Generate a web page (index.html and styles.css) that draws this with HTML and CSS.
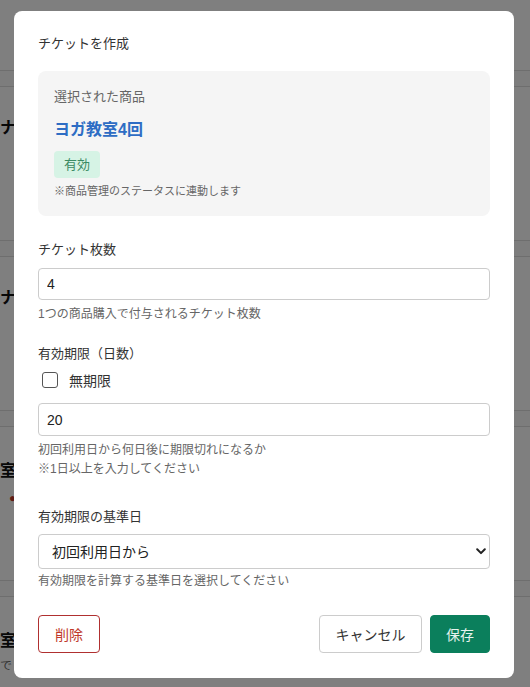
FILE: index.html
```html
<!DOCTYPE html>
<html lang="ja">
<head>
<meta charset="utf-8">
<title>チケットを作成</title>
<link rel="stylesheet" href="styles.css">
</head>
<body>
<div class="page">
  <div class="page-head"></div>
  <div class="band"></div>
  <div class="row"><span class="row-title">ナ</span></div>
  <div class="band"></div>
  <div class="row"><span class="row-title">ナ</span></div>
  <div class="band"></div>
  <div class="row row-b"><span class="row-title">室</span><span class="row-mark">●</span></div>
  <div class="band"></div>
  <div class="row row-b"><span class="row-title">室</span><span class="row-sub">で</span></div>
</div>

<div class="overlay">
  <div class="modal">
    <div class="modal-title">チケットを作成</div>

    <div class="product">
      <div class="product-label">選択された商品</div>
      <div class="product-name">ヨガ教室4回</div>
      <span class="badge">有効</span>
      <div class="product-note">※商品管理のステータスに連動します</div>
    </div>

    <div class="field field-first">
      <div class="label">チケット枚数</div>
      <input class="input" type="text" value="4">
      <div class="help">1つの商品購入で付与されるチケット枚数</div>
    </div>

    <div class="field">
      <div class="label">有効期限（日数）</div>
      <label class="check-row"><span class="checkbox"></span><span class="check-text">無期限</span></label>
      <input class="input input-days" type="text" value="20">
      <div class="help">初回利用日から何日後に期限切れになるか</div>
      <div class="help">※1日以上を入力してください</div>
    </div>

    <div class="field field-base">
      <div class="label">有効期限の基準日</div>
      <div class="select-wrap">
        <select class="select">
          <option>初回利用日から</option>
        </select>
        <svg class="chevron" width="10" height="7" viewBox="0 0 10 7"><path d="M1.2 1.3 L5 5.1 L8.8 1.3" fill="none" stroke="#222" stroke-width="2" stroke-linecap="round" stroke-linejoin="round"/></svg>
      </div>
      <div class="help help-tight">有効期限を計算する基準日を選択してください</div>
    </div>

    <div class="actions">
      <button class="btn btn-delete">削除</button>
      <div class="actions-right">
        <button class="btn btn-cancel">キャンセル</button>
        <button class="btn btn-save">保存</button>
      </div>
    </div>
  </div>
</div>
</body>
</html>
```

FILE: styles.css
```css
* { box-sizing: border-box; }

html, body {
  margin: 0;
  padding: 0;
  height: 100%;
}

body {
  font-family: "Liberation Sans", "Noto Sans CJK JP", sans-serif;
  color: #333;
  background: #fff;
  overflow: hidden;
}

/* background page */
.page {
  width: 530px;
  height: 687px;
  overflow: hidden;
}
.page-head { height: 70px; }
.band {
  height: 17px;
  border-top: 1px solid #dcdcdc;
  border-bottom: 1px solid #dcdcdc;
  background: #fafafa;
}
.row {
  height: 153px;
  padding-top: 30px;
  display: flex;
  flex-direction: column;
  align-items: flex-start;
}
.row-b { padding-top: 33px; }
.row-title {
  font-weight: bold;
  font-size: 16px;
  line-height: 22px;
  color: #111;
}
.row-mark {
  color: #c0392b;
  font-size: 12px;
  margin-left: 9px;
  margin-top: 9px;
}
.row-sub {
  font-size: 12px;
  color: #666;
  margin-top: 4px;
}

/* overlay */
.overlay {
  position: fixed;
  inset: 0;
  background: rgba(0, 0, 0, 0.5);
  padding: 11px 0 0 14px;
}

.modal {
  width: 500px;
  height: 667px;
  background: #fff;
  border-radius: 8px;
  padding: 23px 24px 0 24px;
}

.modal-title {
  font-size: 13px;
  line-height: 20px;
  color: #333;
}

.product {
  margin-top: 17px;
  background: #f5f5f5;
  border-radius: 8px;
  padding: 16px 16px 17px 16px;
  display: flex;
  flex-direction: column;
  align-items: flex-start;
}
.product-label {
  font-size: 13px;
  line-height: 20px;
  color: #666;
}
.product-name {
  margin-top: 11px;
  font-size: 16px;
  line-height: 24px;
  font-weight: bold;
  color: #2e6dc4;
}
.badge {
  margin-top: 9px;
  height: 27px;
  line-height: 27px;
  padding: 0 10px;
  font-size: 13px;
  border-radius: 4px;
  background: #d6f3e5;
  color: #3a8a63;
}
.product-note {
  margin-top: 5px;
  font-size: 11px;
  line-height: 16px;
  color: #666;
}

.field { margin-top: 20px; }
.field-first { margin-top: 24px; }
.field-base { margin-top: 28px; }

.label {
  font-size: 13px;
  line-height: 20px;
  color: #333;
}

.input {
  display: block;
  width: 100%;
  height: 32px;
  margin-top: 8px;
  border: 1px solid #cccccc;
  border-radius: 4px;
  padding: 0 8px;
  font-family: "Liberation Sans", "Noto Sans CJK JP", sans-serif;
  font-size: 14px;
  color: #222;
  background: #fff;
  outline: none;
}
.input-days {
  height: 33px;
  margin-top: 13px;
}

.help {
  font-size: 12px;
  line-height: 19px;
  color: #666;
  margin-top: 5px;
}
.help + .help { margin-top: 0; }
.help-tight { margin-top: 3px; }

.check-row {
  display: flex;
  align-items: center;
  margin-top: 6px;
  height: 20px;
  padding-left: 4px;
}
.checkbox {
  width: 16px;
  height: 16px;
  border: 1px solid #555;
  border-radius: 3px;
  background: #fff;
}
.check-text {
  margin-left: 11px;
  font-size: 14px;
  color: #333;
}

.select-wrap {
  position: relative;
  margin-top: 7px;
}
.select {
  display: block;
  width: 100%;
  height: 35px;
  -webkit-appearance: none;
  appearance: none;
  border: 1px solid #cccccc;
  border-radius: 4px;
  background: #fff;
  padding: 0 30px 0 13px;
  font-family: "Liberation Sans", "Noto Sans CJK JP", sans-serif;
  font-size: 14px;
  color: #222;
  outline: none;
}
.chevron {
  position: absolute;
  right: 4px;
  top: 14px;
}

.actions {
  margin-top: 24px;
  display: flex;
  justify-content: space-between;
  align-items: center;
}
.actions-right {
  display: flex;
  gap: 8px;
}
.btn {
  height: 38px;
  border-radius: 4px;
  font-family: "Liberation Sans", "Noto Sans CJK JP", sans-serif;
  font-size: 14px;
  padding: 0;
  white-space: nowrap;
  cursor: pointer;
}
.btn-delete {
  width: 62px;
  background: #fff;
  border: 1px solid #b03030;
  color: #c0392b;
}
.btn-cancel {
  width: 103px;
  background: #fff;
  border: 1px solid #cccccc;
  color: #333;
}
.btn-save {
  width: 60px;
  background: #0b7f5c;
  border: 1px solid #0b7f5c;
  color: #e6f3ee;
}
```
